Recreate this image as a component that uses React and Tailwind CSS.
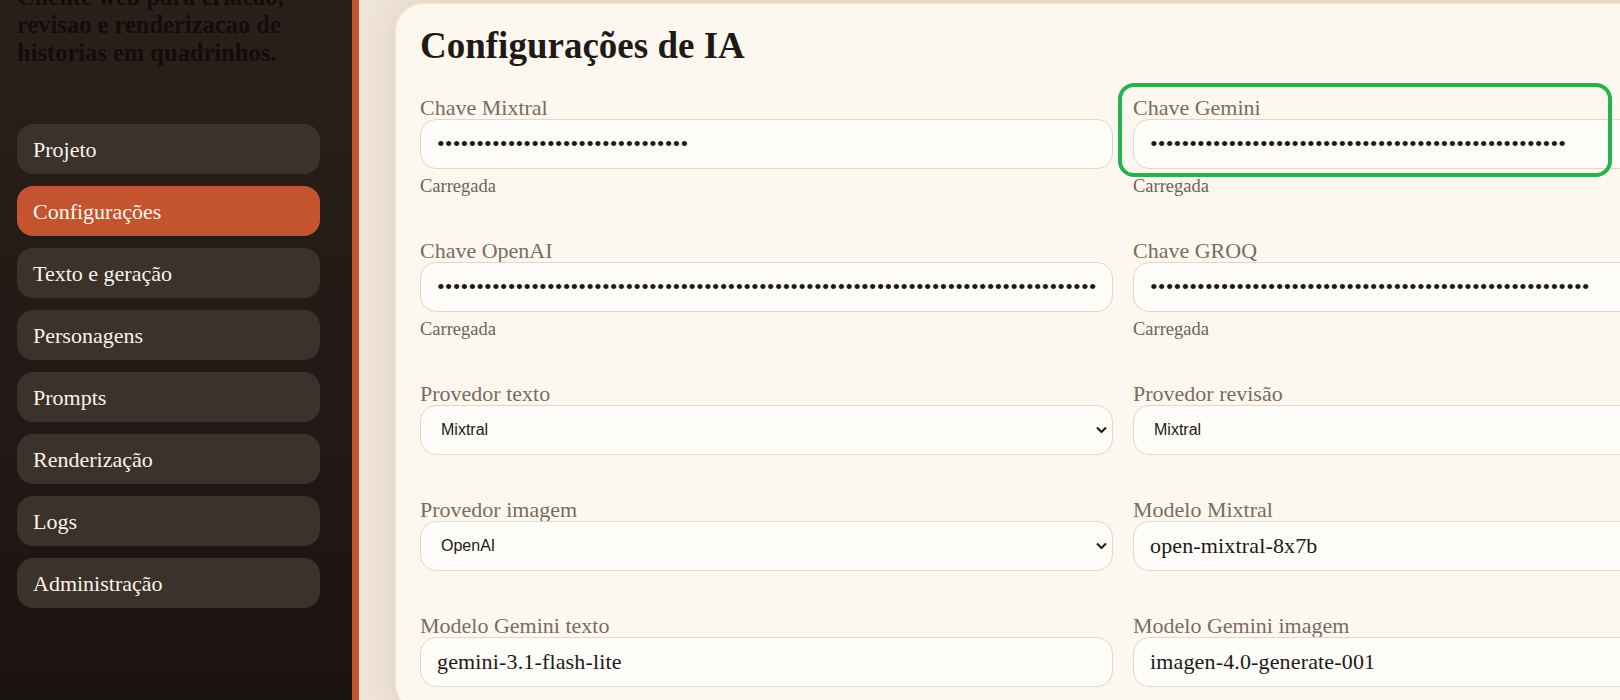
import React from 'react';

const navItems = [
  'Projeto',
  'Configurações',
  'Texto e geração',
  'Personagens',
  'Prompts',
  'Renderização',
  'Logs',
  'Administração',
];

const inputCls =
  "h-[50px] w-full rounded-[16px] border border-[#e3d6c4] bg-[#fffdf9] px-4 font-['Liberation_Serif',serif] text-[22px] text-[#1e1915] tracking-[0.15px] outline-none";

const selectCls =
  "h-[50px] w-full appearance-none rounded-[16px] border border-[#e3d6c4] bg-[#fffdf9] pl-[20px] pr-8 font-['Liberation_Sans',Arial,sans-serif] text-[16px] text-[#1e1915] outline-none";

function Field({ label, hint, children, highlight }) {
  return (
    <div className="relative flex flex-col">
      <label className="text-[22px] leading-[23px] text-[#7a6c5f]">{label}</label>
      {children}
      {hint && <span className="mt-[7px] text-[18.5px] leading-[20px] text-[#6e6256]">{hint}</span>}
      {highlight && (
        <div className="pointer-events-none absolute -left-[15px] -top-[13px] h-[94px] w-[494px] rounded-[16px] border-[4px] border-[#25b34b]" />
      )}
    </div>
  );
}

function Secret({ length }) {
  return <input type="password" readOnly value={'x'.repeat(length)} className={inputCls} />;
}

function Choice({ value, options }) {
  return (
    <div className="relative">
      <select className={selectCls} defaultValue={value}>
        {options.map((o) => (
          <option key={o}>{o}</option>
        ))}
      </select>
      <svg
        className="pointer-events-none absolute right-[6px] top-1/2 -translate-y-1/2"
        width="11"
        height="7"
        viewBox="0 0 11 7"
        fill="none"
      >
        <path d="M1 1l4.5 4.5L10 1" stroke="#1e1915" strokeWidth="2" />
      </svg>
    </div>
  );
}

function Plain({ value }) {
  return <input type="text" readOnly value={value} className={inputCls} />;
}

export default function App() {
  const providers = ['Mixtral', 'OpenAI', 'Gemini', 'GROQ'];

  return (
    <div className="flex h-[700px] w-[1620px] overflow-hidden font-['Liberation_Serif',serif]">
      {/* sidebar */}
      <aside className="w-[359px] shrink-0 border-r-[7px] border-[#c4532f] bg-gradient-to-b from-[#2a201a] to-[#1a1411] px-[17px]">
        <p className="-mt-[17px] mb-[57px] text-[24.5px] font-bold leading-[28px] text-[#120d0a]">
          Cliente web para criacao,
          <br />
          revisao e renderizacao de
          <br />
          historias em quadrinhos.
        </p>
        <nav className="flex w-[303px] flex-col gap-3">
          {navItems.map((item) => (
            <a
              key={item}
              href="#"
              className={
                item === 'Configurações'
                  ? 'flex h-[50px] items-center rounded-[16px] bg-[#c4532f] pl-4 text-[22px] text-[#fff8ef]'
                  : 'flex h-[50px] items-center rounded-[16px] bg-[#3a322b] pl-4 text-[22px] text-[#fbf3e9]'
              }
            >
              {item}
            </a>
          ))}
        </nav>
      </aside>

      {/* main */}
      <main className="flex-1 bg-[#efe5d8] pl-[36px] pt-[3px]">
        <section className="w-[1456px] rounded-[28px] border border-[#efe4d4] bg-[#fdf8ef] p-6 shadow-[0_0_36px_rgba(150,100,60,0.18)]">
          <h2 className="mb-8 text-[37px] font-bold leading-[36px] text-[#1f1a16]">Configurações de IA</h2>
          <div className="grid grid-cols-2 gap-x-5 gap-y-[43px]">
            <Field label="Chave Mixtral" hint="Carregada">
              <Secret length={32} />
            </Field>
            <Field label="Chave Gemini" hint="Carregada" highlight>
              <Secret length={53} />
            </Field>
            <Field label="Chave OpenAI" hint="Carregada">
              <Secret length={164} />
            </Field>
            <Field label="Chave GROQ" hint="Carregada">
              <Secret length={56} />
            </Field>
            <Field label="Provedor texto">
              <Choice value="Mixtral" options={providers} />
            </Field>
            <Field label="Provedor revisão">
              <Choice value="Mixtral" options={providers} />
            </Field>
            <Field label="Provedor imagem">
              <Choice value="OpenAI" options={providers} />
            </Field>
            <Field label="Modelo Mixtral">
              <Plain value="open-mixtral-8x7b" />
            </Field>
            <Field label="Modelo Gemini texto">
              <Plain value="gemini-3.1-flash-lite" />
            </Field>
            <Field label="Modelo Gemini imagem">
              <Plain value="imagen-4.0-generate-001" />
            </Field>
          </div>
        </section>
      </main>
    </div>
  );
}
